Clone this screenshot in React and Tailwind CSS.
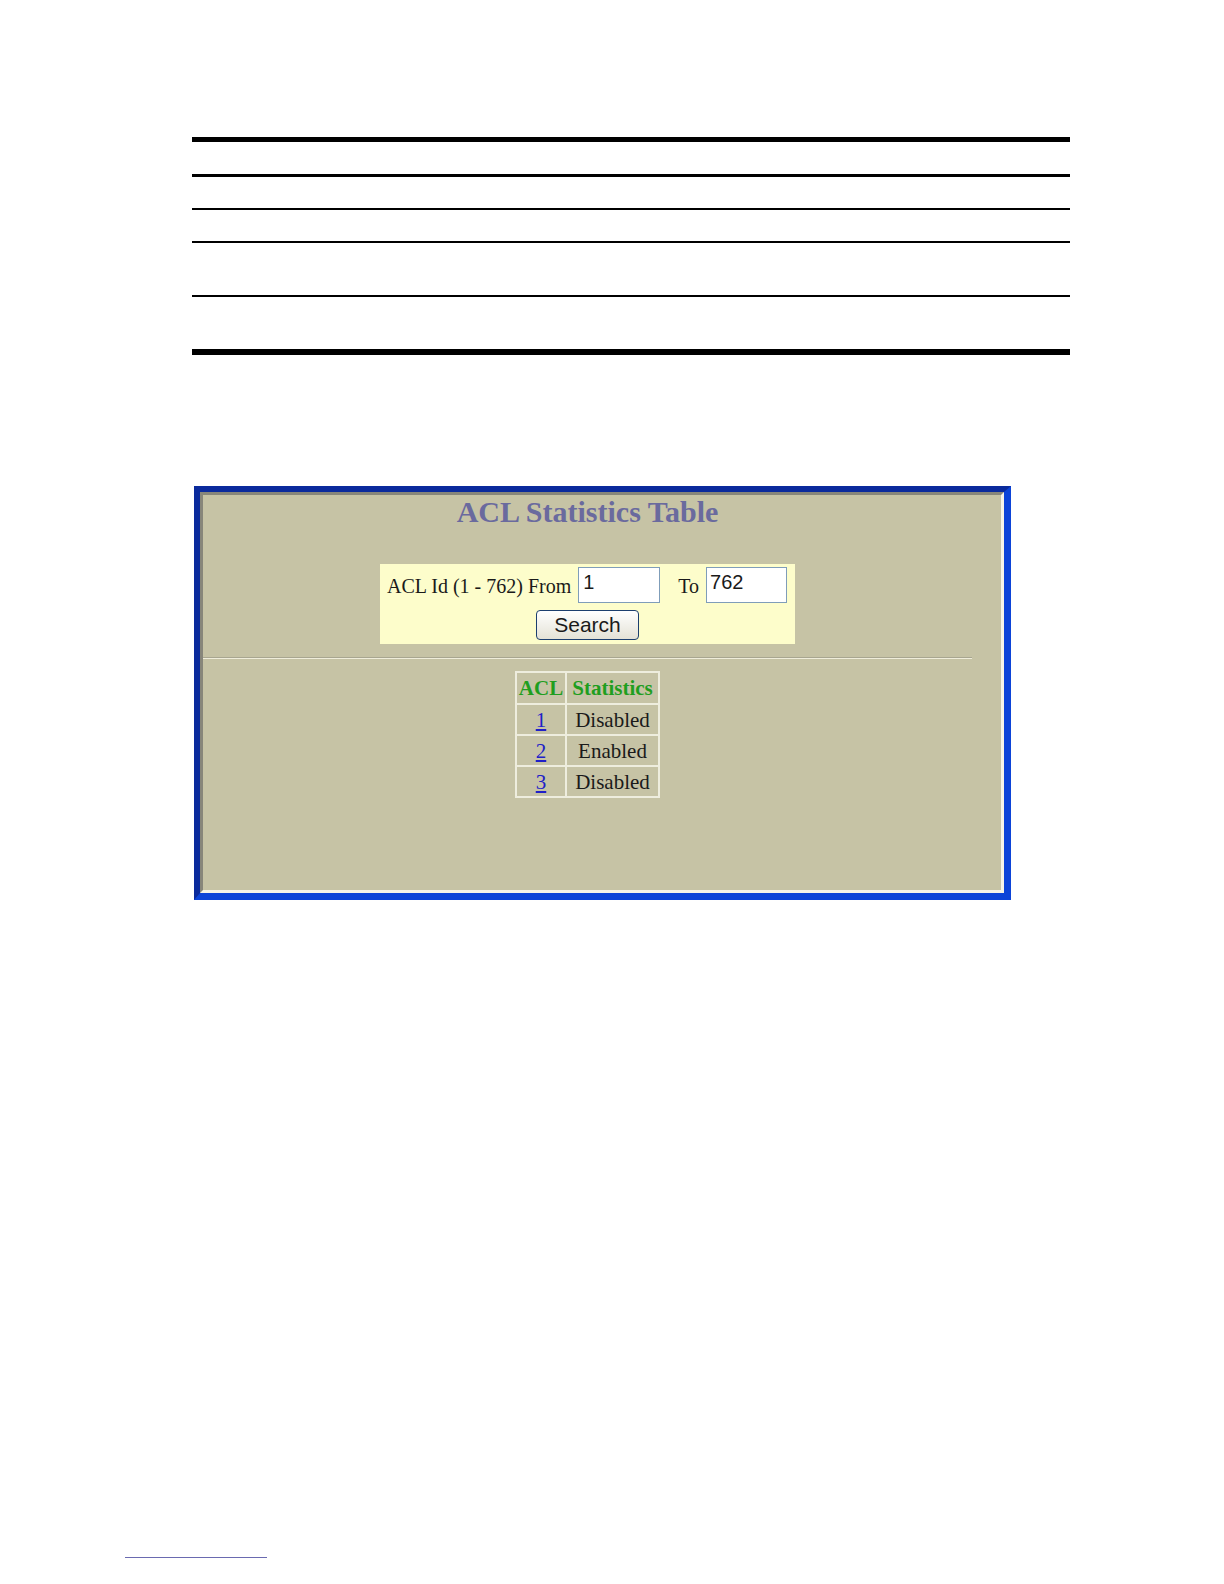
import React from "react";

export default function App() {
  const serif = { fontFamily: '"Liberation Serif", "Times New Roman", serif' };
  const sans = { fontFamily: '"Liberation Sans", Arial, sans-serif' };
  const rows = [
    ["1", "Disabled"],
    ["2", "Enabled"],
    ["3", "Disabled"],
  ];
  return (
    <div className="w-[1224px] h-[1584px] bg-white flex flex-col">
      {/* top rule table */}
      <div className="ml-[192px] w-[878px] mt-[137px] flex flex-col">
        <div className="h-[5px] bg-black" />
        <div className="h-[32px]" />
        <div className="h-[3px] bg-black" />
        <div className="h-[31px]" />
        <div className="h-[2px] bg-black" />
        <div className="h-[31px]" />
        <div className="h-[2px] bg-black" />
        <div className="h-[52px]" />
        <div className="h-[2px] bg-black" />
        <div className="h-[52px]" />
        <div className="h-[6px] bg-black" />
      </div>

      {/* screenshot */}
      <div className="ml-[194px] mt-[131px] w-[817px] h-[414px] border-l-[6px] border-t-[6px] border-r-[7px] border-b-[7px] border-l-[#0a2a9c] border-t-[#0a2a9c] border-r-[#0c44d8] border-b-[#0c44d8]">
        <div className="w-full h-full bg-[#c6c3a5] border-t-[3px] border-l-[3px] border-t-[#87867a] border-l-[#87867a] border-r-[3px] border-b-[3px] border-r-[#f6f4e8] border-b-[#f6f4e8]">
          <div className="w-[769px] flex flex-col items-center">
            <div
              className="text-[30px] leading-[34px] font-bold text-[#6a6a9e] pt-[0px]"
              style={serif}
            >
              ACL Statistics Table
            </div>

            <div className="mt-[35px] w-[415px] h-[80px] bg-[#fdfdcb] flex flex-col items-center pt-[3px]">
              <div className="flex items-center w-full pl-[7px]">
                <span className="text-[20px] text-[#1a1a1a] mr-[7px] mt-[2px]" style={serif}>
                  ACL Id (1 - 762) From
                </span>
                <div
                  className="w-[82px] h-[36px] bg-white border border-[#7f9db9] pl-[4px] text-[20px] leading-[28px] text-[#1a1a1a]"
                  style={sans}
                >
                  1
                </div>
                <span className="text-[20px] text-[#1a1a1a] ml-[18px] mr-[7px] mt-[2px]" style={serif}>
                  To
                </span>
                <div
                  className="w-[81px] h-[36px] bg-white border border-[#7f9db9] pl-[3px] text-[20px] leading-[28px] text-[#1a1a1a]"
                  style={sans}
                >
                  762
                </div>
              </div>
              <div
                className="mt-[7px] w-[103px] h-[30px] rounded-[4px] border border-[#1c3f6e] bg-gradient-to-b from-white to-[#e4e2d6] flex items-center justify-center text-[21px] text-[#1a1a1a] ml-[0px]"
                style={sans}
              >
                Search
              </div>
            </div>

            <div className="mt-[13px] w-full h-[2px] border-t border-t-[#a8a690] bg-[#efedda]" />

            <table
              className="mt-[12px] border-collapse border-2 border-[#eeedde] text-[21px]"
              style={serif}
            >
              <thead>
                <tr className="h-[32px]">
                  <th className="w-[50px] border-2 border-[#eeedde] text-[#1f9e1f] font-bold px-0 leading-[24px]">
                    ACL
                  </th>
                  <th className="w-[93px] border-2 border-[#eeedde] text-[#1f9e1f] font-bold px-0 leading-[24px]">
                    Statistics
                  </th>
                </tr>
              </thead>
              <tbody>
                {rows.map(([id, st]) => (
                  <tr key={id} className="h-[31px]">
                    <td className="border-2 border-[#eeedde] text-center leading-[24px]">
                      <span className="text-[#2020c8] underline">{id}</span>
                    </td>
                    <td className="border-2 border-[#eeedde] text-center text-[#1a1a1a] leading-[24px]">
                      {st}
                    </td>
                  </tr>
                ))}
              </tbody>
            </table>
          </div>
        </div>
      </div>

      {/* footnote separator */}
      <div className="ml-[125px] mt-[657px] w-[142px] h-[1px] bg-[#6a6ab0]" />
    </div>
  );
}
